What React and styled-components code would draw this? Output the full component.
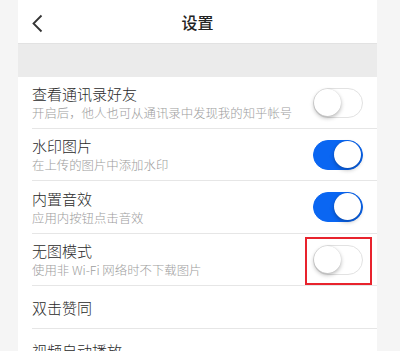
import React from "react";
import styled, { createGlobalStyle } from "styled-components";

const GlobalStyle = createGlobalStyle`
  html, body {
    margin: 0;
    padding: 0;
    background: #f5f5f5;
    font-family: "Noto Sans CJK SC", "Noto Sans", sans-serif;
  }
`;

const Panel = styled.div`
  width: 359px;
  margin-left: 18px;
  background: #fff;
  height: 351px;
  overflow: hidden;
`;

const Header = styled.div`
  height: 43px;
  border-bottom: 1px solid #e2e2e2;
  display: flex;
  align-items: center;
  justify-content: center;
  position: relative;
`;

const BackButton = styled.div`
  position: absolute;
  left: 11px;
  top: 13px;
  width: 16px;
  height: 20px;
  display: flex;
  align-items: center;
  justify-content: center;
`;

const Title = styled.div`
  font-size: 16px;
  font-weight: 500;
  color: #222;
`;

const Band = styled.div`
  height: 33px;
  background: #ebebeb;
`;

const List = styled.div`
  padding-left: 14px;
`;

const Row = styled.div`
  height: ${(p) => p.$h}px;
  display: flex;
  align-items: center;
  justify-content: space-between;
  padding-right: 14px;
  border-bottom: 1px solid #e6e6e6;
  box-sizing: border-box;
`;

const Texts = styled.div`
  display: flex;
  flex-direction: column;
  gap: 1px;
`;

const Label = styled.div`
  font-size: 15px;
  font-weight: 300;
  line-height: 21px;
  color: #2a2a2a;
`;

const Sub = styled.div`
  font-size: 12.4px;
  font-weight: 300;
  line-height: 17px;
  color: #9d9d9d;
`;

const Switch = styled.div`
  position: relative;
  width: 50px;
  height: 30px;
  border-radius: 15px;
  box-sizing: border-box;
  background: ${(p) => (p.$on ? "#0a66f2" : "#fff")};
  border: 1.5px solid ${(p) => (p.$on ? "#0a66f2" : "#e2e2e2")};
  flex-shrink: 0;
`;

const Knob = styled.div`
  position: absolute;
  top: 0;
  left: ${(p) => (p.$on ? "20px" : "0")};
  width: 27px;
  height: 27px;
  border-radius: 50%;
  background: #fff;
  box-shadow: 0 2px 4px rgba(0, 0, 0, 0.28), 0 0 1px rgba(0, 0, 0, 0.15);
`;

const Highlight = styled.div`
  position: absolute;
  top: -9px;
  left: -9px;
  right: -10px;
  bottom: -11px;
  border: 2px solid #e8232d;
  pointer-events: none;
`;

const items = [
  { label: "查看通讯录好友", sub: "开启后，他人也可从通讯录中发现我的知乎帐号", on: false, h: 52 },
  { label: "水印图片", sub: "在上传的图片中添加水印", on: true, h: 52 },
  { label: "内置音效", sub: "应用内按钮点击音效", on: true, h: 53 },
  { label: "无图模式", sub: "使用非 Wi-Fi 网络时不下载图片", on: false, h: 52, mark: true },
  { label: "双击赞同", h: 43 },
  { label: "视频自动播放", h: 43 },
];

export default function App() {
  return (
    <>
      <GlobalStyle />
      <Panel>
        <Header>
          <BackButton>
            <svg width="12" height="19" viewBox="0 0 12 19">
              <path d="M10.5 1.5 L2.5 9.5 L10.5 17.5" fill="none" stroke="#333" strokeWidth="1.8" />
            </svg>
          </BackButton>
          <Title>设置</Title>
        </Header>
        <Band />
        <List>
          {items.map((it) => (
            <Row key={it.label} $h={it.h}>
              <Texts>
                <Label>{it.label}</Label>
                {it.sub && <Sub>{it.sub}</Sub>}
              </Texts>
              {it.sub && (
                <Switch $on={it.on}>
                  <Knob $on={it.on} />
                  {it.mark && <Highlight />}
                </Switch>
              )}
            </Row>
          ))}
        </List>
      </Panel>
    </>
  );
}
